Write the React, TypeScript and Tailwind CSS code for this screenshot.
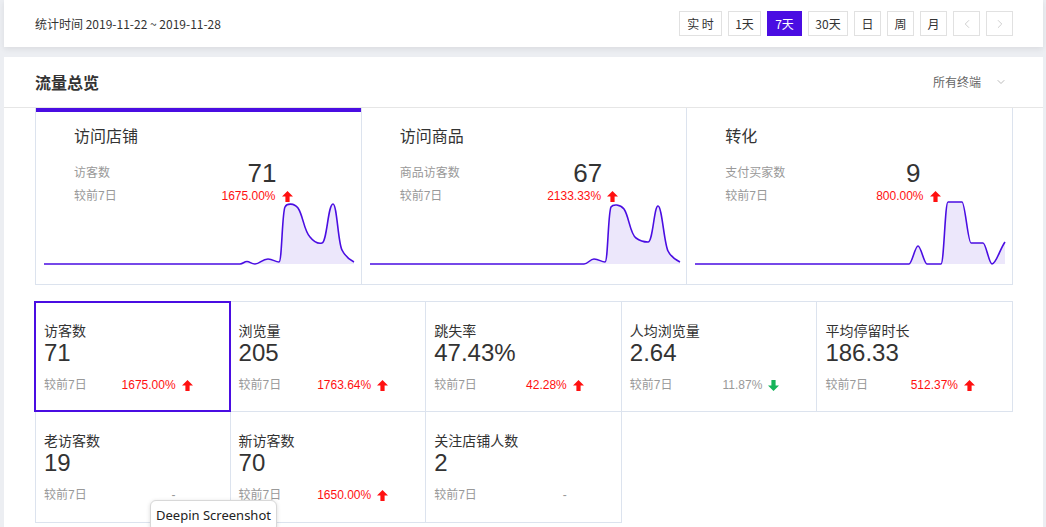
import { ChevronDown, ChevronLeft, ChevronRight } from "lucide-react"

const PURPLE = "#4a0de2"

const ranges = [
  { label: "实 时", w: "w-[43px]" },
  { label: "1天", w: "w-[33px]" },
  { label: "7天", w: "w-[35px]", active: true },
  { label: "30天", w: "w-[40px]" },
  { label: "日", w: "w-[27px]" },
  { label: "周", w: "w-[27px]" },
  { label: "月", w: "w-[27px]" },
]

const overview = [
  {
    title: "访问店铺",
    label: "访客数",
    value: "71",
    pct: "1675.00%",
    active: true,
    line: "M0 63 L196 63 C199 63 200 60.5 203 60.5 C206 60.5 207 63 211 63 C216 63 218 58 224 58 C229 58 231 61 235 61 C238 61 238 12 241 6 C243 2 250 2 254 7 C259 14 260 30 266 36 C270 41 274 43 278 42 C283 41 284 3 289 3 C293 3 294 42 298 49 C301 55 306 59 310 61",
  },
  {
    title: "访问商品",
    label: "商品访客数",
    value: "67",
    pct: "2133.33%",
    line: "M0 63 L214 63 C218 63 220 58 224 58 C229 58 231 61 235 61 C238 61 238 12 241 6 C243 3 250 3 254 8 C259 15 260 33 266 37 C270 40 274 41 278 41 C283 41 284 5 288 5 C292 5 294 42 298 50 C301 56 306 59 310 61",
  },
  {
    title: "转化",
    label: "支付买家数",
    value: "9",
    pct: "800.00%",
    line: "M0 63 L214 63 C217 63 220 45 223 45 C226 45 229 63 232 63 L246 63 C249 63 250 1 253 1 L267 1 C270 1 273 42 276 42 L288 42 C291 42 294 63 297 63 C301 63 305 48 310 41",
  },
]

type Trend = "up" | "down" | "none"

const metrics: { title: string; value: string; pct: string; trend: Trend; active?: boolean }[] = [
  { title: "访客数", value: "71", pct: "1675.00%", trend: "up", active: true },
  { title: "浏览量", value: "205", pct: "1763.64%", trend: "up" },
  { title: "跳失率", value: "47.43%", pct: "42.28%", trend: "up" },
  { title: "人均浏览量", value: "2.64", pct: "11.87%", trend: "down" },
  { title: "平均停留时长", value: "186.33", pct: "512.37%", trend: "up" },
  { title: "老访客数", value: "19", pct: "-", trend: "none" },
  { title: "新访客数", value: "70", pct: "1650.00%", trend: "up" },
  { title: "关注店铺人数", value: "2", pct: "-", trend: "none" },
]

function Arrow({ dir }: { dir: Trend }) {
  if (dir === "none") return <span className="inline-block w-[11px] ml-[6px]" />
  return (
    <svg
      width="11"
      height="11"
      viewBox="0 0 11 11"
      className={`ml-[6px] ${dir === "down" ? "rotate-180" : ""}`}
    >
      <path
        d="M5.5 0 L11 5.5 L7.6 5.5 L7.6 11 L3.4 11 L3.4 5.5 L0 5.5 Z"
        fill={dir === "down" ? "#16b45a" : "#ff1010"}
      />
    </svg>
  )
}

export default function App() {
  return (
    <div className="relative w-[1046px] h-[527px] overflow-hidden bg-[#eceef2] pl-[4px] pr-[3px] font-['Liberation_Sans','Noto_Sans_CJK_SC',sans-serif] text-[#333]">
      {/* top bar */}
      <div className="h-[47px] bg-white shadow-[0_2px_6px_rgba(0,0,0,0.08)] flex items-center justify-between pl-[31px] pr-[30px]">
        <div className="text-[12px] font-['Noto_Sans_CJK_SC',sans-serif] text-[#333]">
          统计时间 2019-11-22 ~ 2019-11-28
        </div>
        <div className="flex gap-[6px] font-['Noto_Sans_CJK_SC',sans-serif] text-[12px]">
          {ranges.map((r) => (
            <div
              key={r.label}
              className={`${r.w} h-[25px] flex items-center justify-center border ${
                r.active ? "bg-[#4a0de2] border-[#4a0de2] text-white" : "border-[#e1e1e1] text-[#333] bg-white"
              }`}
            >
              {r.label}
            </div>
          ))}
          <div className="w-[27px] h-[25px] flex items-center justify-center border border-[#e1e1e1] text-[#c8c8c8]">
            <ChevronLeft size={14} strokeWidth={1.5} />
          </div>
          <div className="w-[27px] h-[25px] flex items-center justify-center border border-[#e1e1e1] text-[#c8c8c8]">
            <ChevronRight size={14} strokeWidth={1.5} />
          </div>
        </div>
      </div>

      {/* traffic overview */}
      <div className="mt-[10px] bg-white h-[500px]">
        <div className="h-[51px] border-b border-[#e6e6e6] flex items-center justify-between pl-[31px] pr-[36px]">
          <div className="text-[16px] font-bold text-[#333] font-['Noto_Sans_CJK_SC',sans-serif]">流量总览</div>
          <div className="flex items-center gap-[14px] text-[12px] text-[#666] font-['Noto_Sans_CJK_SC',sans-serif]">
            所有终端
            <ChevronDown size={12} className="text-[#bbb]" />
          </div>
        </div>

        <div className="pl-[31px] pr-[30px]">
          <div className="grid grid-cols-3 border-l border-[#dce3ee]">
            {overview.map((c) => (
              <div key={c.title} className="border-r border-b border-[#dce3ee] pb-[19px]">
                <div className={`h-[4px] ${c.active ? "bg-[#4a0de2]" : ""}`} />
                <div className="pl-[38px] pt-[13px] text-[16px] leading-[24px] text-[#333]">{c.title}</div>
                <div className="flex pl-[38px] mt-[10px]">
                  <div className="w-[138px] text-[12px] text-[#999] leading-[28px]">{c.label}</div>
                  <div className="w-[100px] text-center text-[26px] leading-[28px] text-[#333]">{c.value}</div>
                </div>
                <div className="flex pl-[38px]">
                  <div className="w-[138px] text-[12px] text-[#999] leading-[18px]">较前7日</div>
                  <div className="w-[100px] pr-[10px] flex items-center justify-center text-[12px] leading-[18px] text-[#ff1010]">
                    {c.pct}
                    <Arrow dir="up" />
                  </div>
                </div>
                <svg width="310" height="64" viewBox="0 0 310 64" className="ml-[8px] -mt-[4px] block overflow-visible">
                  <path d={`${c.line} L310 63 L0 63 Z`} fill="#ece7fb" />
                  <path d={c.line} fill="none" stroke={PURPLE} strokeWidth="1.6" />
                </svg>
              </div>
            ))}
          </div>

          <div className="mt-[16px] grid grid-cols-5">
            {metrics.map((m, i) => (
              <div
                key={m.title}
                className={`relative h-[111px] border-r border-b border-[#dce3ee] ${i % 5 === 0 ? "border-l" : ""} ${
                  i < 5 ? "border-t" : ""
                }`}
              >
                {m.active && (
                  <div className="absolute -top-px -bottom-px -left-[2px] -right-px border-2 border-[#4a0de2] z-10" />
                )}
                <div className="pl-[8px] pt-[20px] text-[14px] leading-[18px] text-[#333]">{m.title}</div>
                <div className="pl-[8px] text-[24px] leading-[26px] text-[#333]">{m.value}</div>
                <div className="flex items-center justify-between pl-[8px] pr-[37px] mt-[11px] text-[12px] leading-[16px]">
                  <span className="text-[#999]">较前7日</span>
                  <span
                    className={`flex items-center ${
                      m.trend === "up" ? "text-[#ff1010]" : "text-[#999]"
                    }`}
                  >
                    {m.pct}
                    <Arrow dir={m.trend} />
                  </span>
                </div>
              </div>
            ))}
          </div>
        </div>
      </div>

      {/* system tooltip */}
      <div className="absolute left-[150px] top-[500px] w-[127px] h-[32px] rounded-[6px] bg-white border border-[#d8d8d8] shadow-[0_1px_4px_rgba(0,0,0,0.15)] flex justify-center pt-[5px] text-[13px] text-[#222] font-['Noto_Sans',sans-serif]">
        Deepin Screenshot
      </div>
    </div>
  )
}
